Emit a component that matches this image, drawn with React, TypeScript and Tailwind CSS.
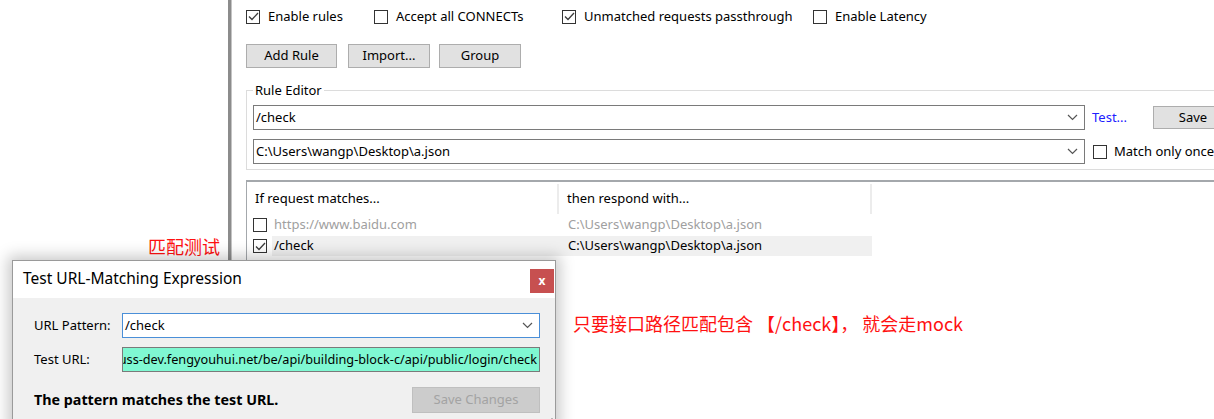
import React from 'react';

const ui = "font-['Noto_Sans','Liberation_Sans',sans-serif]";
const cjk = "font-['Noto_Sans_CJK_SC','Noto_Sans',sans-serif]";

function CheckBox({ checked }: { checked?: boolean }) {
  return (
    <span className="flex h-[14px] w-[14px] shrink-0 items-center justify-center border border-[#333333] bg-white">
      {checked && (
        <svg width="11" height="9" viewBox="0 0 11 9" fill="none">
          <path d="M1 4.5 L4 7.5 L10 1" stroke="#3c3c3c" strokeWidth="1.3" />
        </svg>
      )}
    </span>
  );
}

function Chevron() {
  return (
    <svg width="11" height="7" viewBox="0 0 11 7" fill="none">
      <path d="M1 1 L5.5 5.5 L10 1" stroke="#555555" strokeWidth="1.2" />
    </svg>
  );
}

function Combo({ value, width }: { value: string; width: string }) {
  return (
    <div className={`flex h-[25px] ${width} items-center justify-between border border-[#7a7a7a] bg-white pl-[2px] pr-[6px] text-black`}>
      <span>{value}</span>
      <Chevron />
    </div>
  );
}

export default function App() {
  return (
    <div className={`relative flex h-[419px] w-[1214px] overflow-hidden bg-white ${ui}`}>
      {/* left pane */}
      <div className="flex w-[228px] shrink-0 justify-end pr-[8px] pt-[234px]">
        <span className={`text-[18px] leading-[24px] text-[#ff1111] ${cjk}`}>匹配测试</span>
      </div>
      <div className="w-[4px] shrink-0 border-r border-[#c4c4c4] bg-[#8c8c8c]" />

      {/* main pane */}
      <main className="flex-1 overflow-hidden pl-[14px] text-[13px] text-black">
        <div className="flex h-[33px] items-center">
          {[
            { label: 'Enable rules', checked: true, w: 'w-[128px]' },
            { label: 'Accept all CONNECTs', checked: false, w: 'w-[188px]' },
            { label: 'Unmatched requests passthrough', checked: true, w: 'w-[251px]' },
            { label: 'Enable Latency', checked: false, w: 'w-[160px]' },
          ].map((c) => (
            <label key={c.label} className={`flex ${c.w} items-center gap-[8px]`}>
              <CheckBox checked={c.checked} />
              <span>{c.label}</span>
            </label>
          ))}
        </div>

        <div className="mt-[11px] flex h-[24px]">
          <button className="mr-[11px] w-[91px] border border-[#adadad] bg-[#e1e1e1]">Add Rule</button>
          <button className="mr-[9px] w-[82px] border border-[#adadad] bg-[#e1e1e1]">Import...</button>
          <button className="w-[82px] border border-[#adadad] bg-[#e1e1e1]">Group</button>
        </div>

        <fieldset className="mt-[13px] w-[1000px] border border-[#dcdcdc] pb-[5px] pl-[6px] pt-[6px]">
          <legend className="px-[2px] leading-[18px]">Rule Editor</legend>
          <div className="flex items-center">
            <Combo value="/check" width="w-[832px]" />
            <span className="ml-[7px] w-[61px] text-[#2020ff]">Test...</span>
            <button className="h-[23px] w-[80px] border border-[#adadad] bg-[#e1e1e1]">Save</button>
          </div>
          <div className="mt-[9px] flex items-center">
            <Combo value="C:\Users\wangp\Desktop\a.json" width="w-[832px]" />
            <label className="ml-[8px] flex items-center gap-[7px]">
              <CheckBox />
              <span>Match only once</span>
            </label>
          </div>
        </fieldset>

        {/* rules list */}
        <div className="mt-[10px] h-[120px] w-[1000px] border-l border-t-2 border-[#a4a8ac]">
          <div className="flex h-[33px] items-center">
            <div className="flex h-[30px] w-[312px] items-center border-r-2 border-[#ececec] pl-[8px]">If request matches...</div>
            <div className="flex h-[30px] w-[313px] items-center border-r-2 border-[#ececec] pl-[8px]">then respond with...</div>
          </div>
          <div className="flex h-[20px] items-center pl-[6px] text-[#a0a0a0]">
            <CheckBox />
            <span className="w-[299px] pl-[7px]">https://www.baidu.com</span>
            <span className="pl-[2px]">C:\Users\wangp\Desktop\a.json</span>
          </div>
          <div className="mt-[1px] flex h-[20px] items-center pl-[6px]">
            <CheckBox checked />
            <div className="ml-[5px] flex h-full w-[600px] items-center bg-[#f0f0f0]">
              <span className="w-[294px] pl-[2px]">/check</span>
              <span className="pl-[2px]">C:\Users\wangp\Desktop\a.json</span>
            </div>
          </div>
        </div>
      </main>

      {/* test dialog */}
      <div className="absolute left-[12px] top-[260px] w-[544px] border border-[#9a9a9a] bg-[#f0f0f0] shadow-[0_0_14px_4px_rgba(0,0,0,0.22)]">
        <div className="flex h-[37px] items-start justify-between bg-white">
          <span className="pl-[10px] pt-[7px] text-[15.5px] leading-[20px]">Test URL-Matching Expression</span>
          <button className="mr-[1px] mt-[8px] flex h-[24px] w-[24px] items-center justify-center bg-[#c75050] text-[12px] font-bold leading-none text-white">x</button>
        </div>
        <div className="relative h-[130px] px-[15px] pt-[15px] text-[13px]">
          <div className="flex items-center">
            <span className="w-[94px] pl-[6px]">URL Pattern:</span>
            <div className="flex h-[25px] w-[418px] items-center justify-between border border-[#4a8fd8] bg-white pl-[2px] pr-[6px]">
              <span>/check</span>
              <Chevron />
            </div>
          </div>
          <div className="mt-[9px] flex items-center">
            <span className="w-[94px] pl-[6px]">Test URL:</span>
            <div className="flex h-[25px] w-[418px] items-center justify-end overflow-hidden whitespace-nowrap border border-[#7a7a7a] bg-[#7ff8d2] pr-[2px] text-[12.7px]">
              <span>buss-dev.fengyouhui.net/be/api/building-block-c/api/public/login/check</span>
            </div>
          </div>
          <div className="mt-[15px] flex items-center justify-between">
            <span className="pl-[6px] text-[14.3px] font-bold">The pattern matches the test URL.</span>
            <button className="h-[26px] w-[128px] border border-[#bfbfbf] bg-[#cccccc] text-[#a3a3a3]">Save Changes</button>
          </div>
          <div className="absolute bottom-[2px] right-[2px] grid grid-cols-3 gap-[1px]">
            {[0, 0, 1, 0, 1, 1, 1, 1, 1].map((d, i) => (
              <span key={i} className={`h-[2px] w-[2px] ${d ? 'bg-[#b8b8b8]' : ''}`} />
            ))}
          </div>
        </div>
      </div>

      {/* annotation */}
      <span className={`absolute left-[573px] top-[311px] text-[18px] leading-[24px] text-[#ff1111] ${cjk}`}>
        只要接口路径匹配包含 【/check】， 就会走mock
      </span>
    </div>
  );
}
